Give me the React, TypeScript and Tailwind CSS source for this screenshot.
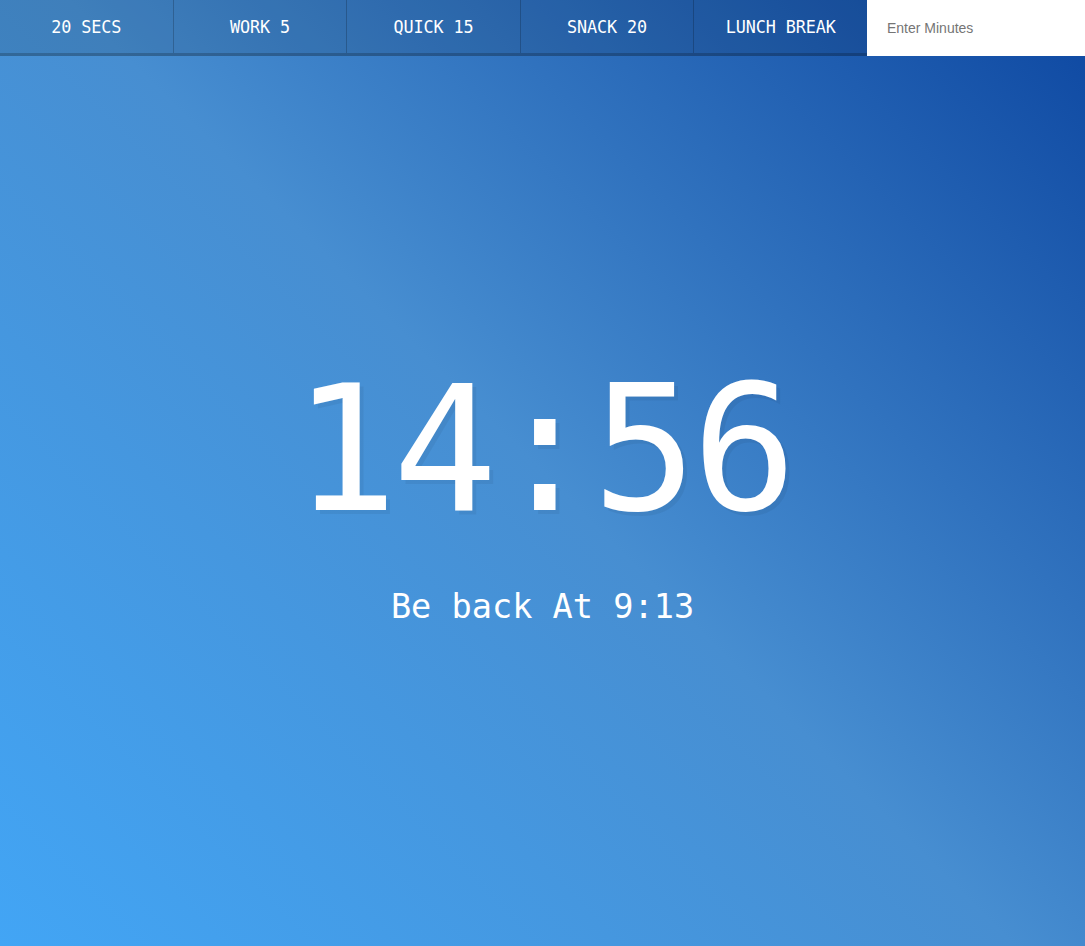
import React from "react";

const buttons = ["20 Secs", "Work 5", "Quick 15", "Snack 20", "Lunch Break"];

export default function App() {
  return (
    <div className="flex min-h-screen flex-col bg-[linear-gradient(45deg,#42a5f5_0%,#478ed1_50%,#0d47a1_100%)] text-center font-['DejaVu_Sans_Mono',monospace]">
      <div className="flex h-[56px]">
        {buttons.map((b) => (
          <button
            key={b}
            className="flex-1 cursor-pointer border-l border-b-[3px] border-l-black/20 border-b-black/20 first:border-l-0 bg-black/10 pt-[2px] text-[16.8px] uppercase text-white font-['DejaVu_Sans_Mono',monospace] tracking-[-0.1px]"
          >
            {b}
          </button>
        ))}
        <form className="flex w-[218px]">
          <input
            type="text"
            placeholder="Enter Minutes"
            className="min-w-0 flex-1 border-0 bg-white px-[20px] pt-[1px] text-[14px] text-black outline-none placeholder:text-[#757575] font-['Liberation_Sans',Arial,sans-serif]"
          />
        </form>
      </div>
      <div className="flex flex-1 flex-col items-center justify-center pb-[10px]">
        <h1 className="m-0 text-[174px] leading-[170px] tracking-[-5px] text-white [text-shadow:4px_4px_0_rgba(0,0,0,0.05)]">
          14:56
        </h1>
        <p className="mt-[52px] text-[33.6px] leading-[40px] text-white">Be back At 9:13</p>
      </div>
    </div>
  );
}
